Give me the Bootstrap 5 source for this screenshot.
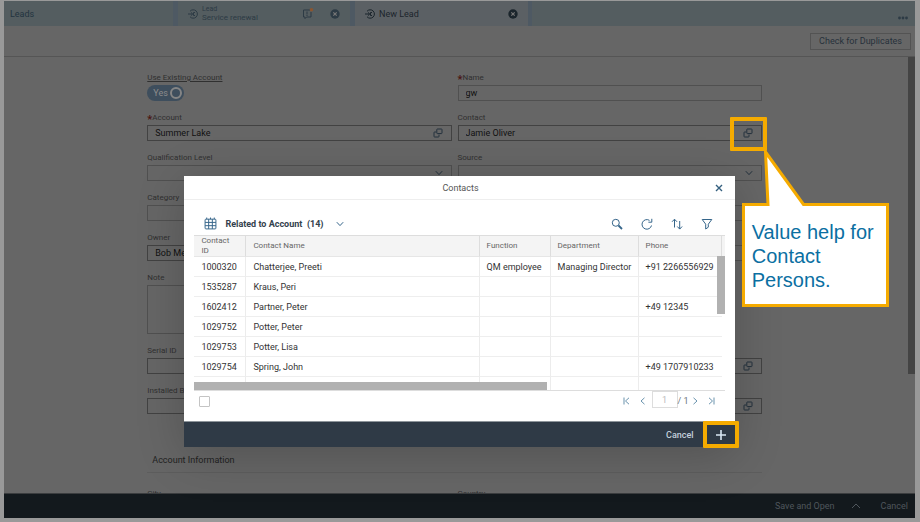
<!DOCTYPE html>
<html lang="en">
<head>
<meta charset="utf-8">
<meta name="viewport" content="width=device-width, initial-scale=1">
<title>New Lead</title>
<link href="https://cdn.jsdelivr.net/npm/bootstrap@5.3.0/dist/css/bootstrap.min.css" rel="stylesheet">
<style>
  body { font-family: Roboto, sans-serif; font-size: 9px; line-height: 12px; background: #999; color: #262626; padding: 1px 5px 4px 4px; min-height: 100vh; }
  svg { display: block; flex: none; fill: none; stroke: currentColor; }
  button { font-size: 9px; line-height: 12px; }
  .plain { background: none; border: 0; padding: 0; color: inherit; }
  .app { background: #666; height: calc(100vh - 5px); }

  .tabbar { height: 25px; background: #545d60; color: #2d3b45; }
  .tab { width: 177px; padding: 0 10px 0 10px; border-right: 5px solid #4e5963; }
  .tab.first { width: 174px; padding-left: 6px; color: #23343f; }
  .tab.active { background: #5b6064; color: #1b252c; border-right-width: 4px; }
  .tab a { color: inherit; text-decoration: none; }
  .tab-kind { font-size: 7px; line-height: 8px; }
  .tab-name { font-size: 8px; line-height: 9px; }
  .dots { padding: 8px 7px 0 0; }
  .toolbar { height: 31px; border-bottom: 1px solid #555; padding-right: 4px; }
  .check-btn { height: 17px; padding: 0 8px; border: 1px solid #535353; color: #27313b; }

  .page { min-height: 0; padding: 14px 10px 0 0; }
  .form-area { width: 68.2%; }
  .pair { display: grid; grid-template-columns: 1fr 1fr; column-gap: 6px; margin-bottom: 10px; }
  .lbl { display: block; font-size: 8px; line-height: 14px; height: 14px; color: #303030; white-space: nowrap; }
  .req::before { content: "*"; color: #4a1410; font-weight: 700; font-size: 11px; line-height: 8px; vertical-align: -3px; }
  .box { position: relative; height: 16px; border: 1px solid #505050; }
  .strong { border-color: #424242; }
  .box input, .box select, .note { background: transparent; border: 0; outline: 0; width: 100%; color: #111; font-size: 9px; line-height: 12px; }
  .box input { padding: 0 7px; height: 14px; }
  .box select { appearance: none; height: 14px; }
  .box button, .box .chev { padding-right: 8px; color: #22303c; }
  .note { display: block; height: 49px; border: 1px solid #505050; resize: none; }
  .switch { width: 37px; height: 16px; border-radius: 8px; background: #3e4e5d; color: #8c8c8c; padding: 0 2px 0 6px; margin-bottom: 0; }
  .switch input { appearance: none; width: 12px; height: 12px; margin: 0; border: 2px solid #858585; border-radius: 50%; }
  .section-title { font-size: 9px; line-height: 12px; color: #222; padding: 40px 0 6px 5px; margin: 0 0 14px; border-bottom: 1px solid #5d5d5d; font-weight: 400; }
  .page-scroll { position: absolute; top: 0; right: 0; width: 7px; height: 317px; background: #444; }
  .app-foot { height: 25px; background: #13191d; border-top: 1px solid #3b3d3f; color: #4f565c; padding-right: 7px; }

  .layer { position: absolute; inset: 0; padding-top: 175px; z-index: 2; }
  .dialog { position: relative; width: 60.4%; background: #fff; color: #333; box-shadow: 0 8px 45px rgba(0,0,0,.2); }
  .dlg-head { height: 24px; border-bottom: 1px solid #eee; padding: 0 12px; color: #555; }
  .dlg-head span { flex: 1; text-align: center; padding-left: 10px; }
  .dlg-bar { padding: 12px 12px 0 10px; height: 35px; color: #35658a; }
  .view-icon { margin-left: 10px; }
  .view-name { font-weight: 700; color: #33414d; padding-left: 8px; }
  .tools { gap: 18px; padding-right: 10px; }
  .grid-view { position: relative; margin: 0 10px; height: 156px; border-bottom: 1px solid #ddd; overflow: hidden; }
  .head-fill { background: #f4f4f4; border-top: 1px solid #ddd; height: 22px; }
  .contacts { table-layout: fixed; border-collapse: separate; border-spacing: 0; width: calc(100% - 3px); margin-top: -22px; }
  .contacts th { height: 22px; padding: 0 7px; font-size: 8px; line-height: 10px; font-weight: 400; color: #666; border-right: 1px solid #ddd; border-bottom: 1px solid #e6e6e6; vertical-align: middle; }
  .contacts td { height: 20px; padding: 0 7px; border-right: 1px solid #ececec; border-bottom: 1px solid #eee; white-space: nowrap; }
  .contacts td:last-child { border-right: 0; }
  .c-id { width: 52px; } .c-fn { width: 71px; } .c-dep { width: 88px; } .c-ph { width: 83px; }
  .bar-v { position: absolute; right: 0; top: 21px; width: 8px; height: 58px; background: #b1b1b1; }
  .bar-h { position: absolute; left: 0; bottom: 0; width: 66.5%; height: 8px; background: #b1b1b1; }
  .pager { height: 30px; padding: 0 20px 10px 15px; color: #6a93ad; }
  .pager input[type=checkbox] { appearance: none; width: 11px; height: 11px; margin: 0; border: 1px solid #c4c4c4; border-radius: 1px; }
  .pager input[type=text] { width: 26px; height: 17px; border: 1px solid #ddd; text-align: center; color: #bbb; font-size: 9px; padding: 0; margin-bottom: 3px; }
  .prev { margin: 0 7px 0 10px; }
  .next { margin: 0 10px 0 4px; }
  .dlg-foot { height: 26px; background: #2f3a46; border-top: 1px solid #8e959b; color: #c3d0dc; }
  .ring { position: absolute; border: 4px solid #f5ab00; border-radius: 1px; }
  .ring-help { right: -6px; top: -9px; width: 37px; height: 34px; z-index: 3; }
  .ring-add { position: relative; width: 36px; height: 27px; margin: -1px -4px -1px 9px; color: #d9e8f4; }
  .callout { position: absolute; left: 6px; top: 27px; width: 150px; height: 160px; }
  .callout svg { position: absolute; inset: 0; }
  .callout p { position: relative; margin: 0; padding: 72px 8px 0 12px; font: 20px/24px "Liberation Sans", sans-serif; color: #0b6fa2; }
</style>
<script src="https://cdn.jsdelivr.net/npm/bootstrap@5.3.0/dist/js/bootstrap.bundle.min.js"></script>
</head>
<body>
<svg width="0" height="0" class="position-absolute" aria-hidden="true">
  <symbol id="help" viewBox="0 0 10 10"><rect x="3.8" y="1" width="5.2" height="4.6" rx=".6"/><path d="M3 4H1.6a.6.6 0 0 0-.6.6v3.8c0 .3.2.6.6.6h3.8c.4 0 .6-.3.6-.6V6.6"/></symbol>
  <symbol id="chev" viewBox="0 0 8 6"><path d="M.8 1.2 4 4.6l3.2-3.4"/></symbol>
  <symbol id="lead" viewBox="0 0 10 10"><path d="M2 2.3a4.2 4.2 0 1 1 0 5.4M0 5h4.5M3 3.4 4.7 5 3 6.6M7 3.5H5.5v3H7"/></symbol>
  <symbol id="shut" viewBox="0 0 10 10"><circle cx="5" cy="5" r="4.7" fill="currentColor" stroke="none"/><path d="m3.3 3.3 3.4 3.4m0-3.4L3.3 6.7" stroke="#777" stroke-width="1.2"/></symbol>
</svg>

<div class="app position-relative d-flex flex-column">
  <nav class="tabbar d-flex flex-shrink-0" aria-label="Open items">
    <div class="tab first d-flex align-items-center"><a href="#">Leads</a></div>
    <div class="tab d-flex align-items-center">
      <svg width="10" height="10"><use href="#lead"/></svg>
      <a href="#" class="ms-1 me-auto"><span class="d-block tab-kind">Lead</span><span class="d-block tab-name">Service renewal</span></a>
      <svg width="12" height="13" viewBox="0 0 12 13" class="me-3"><path d="M8 3H1.500v7H3v1.600L4.600 10H9V5"/><path d="M5 4.500v3M5 8v1"/><circle cx="9.500" cy="2.800" r="1.800" fill="#8a5530" stroke="none"/></svg>
      <button class="plain" aria-label="Close Service renewal"><svg width="10" height="10"><use href="#shut"/></svg></button>
    </div>
    <div class="tab active d-flex align-items-center">
      <svg width="10" height="10"><use href="#lead"/></svg>
      <a href="#" class="ms-1 me-auto" aria-current="page">New Lead</a>
      <button class="plain" aria-label="Close New Lead"><svg width="10" height="10"><use href="#shut"/></svg></button>
    </div>
    <button class="plain ms-auto dots" aria-label="More tabs"><svg width="10" height="4" viewBox="0 0 10 4" stroke="none"><g fill="currentColor" stroke="none"><circle cx="1.500" cy="2" r="1.400"/><circle cx="5" cy="2" r="1.400"/><circle cx="8.500" cy="2" r="1.400"/></g></svg></button>
  </nav>
  <div class="toolbar d-flex align-items-center justify-content-end flex-shrink-0">
    <button class="plain check-btn">Check for Duplicates</button>
  </div>

  <main class="page position-relative flex-grow-1">
    <div class="position-absolute top-0 start-0 end-0 bottom-0 overflow-hidden"><div class="page-scroll"></div></div>
    <form class="form-area mx-auto position-relative">
      <div class="pair">
        <div>
          <label class="lbl text-decoration-underline" for="existing">Use Existing Account</label>
          <div class="switch d-flex align-items-center justify-content-between"><span>Yes</span><input type="checkbox" id="existing" role="switch" checked></div>
        </div>
        <div>
          <label class="lbl req" for="name">Name</label>
          <div class="box"><input id="name" type="text" value="gw"></div>
        </div>
      </div>
      <div class="pair">
        <div>
          <label class="lbl req" for="account">Account</label>
          <div class="box strong d-flex align-items-center"><input id="account" type="text" value="Summer Lake"><button type="button" class="plain" aria-label="Value help for account"><svg width="10" height="10"><use href="#help"/></svg></button></div>
        </div>
        <div>
          <label class="lbl" for="contact">Contact</label>
          <div class="box strong d-flex align-items-center"><input id="contact" type="text" value="Jamie Oliver"><button type="button" class="plain" aria-label="Value help for contact"><svg width="10" height="10"><use href="#help"/></svg></button>
            <div class="ring ring-help">
              <div class="callout">
                <svg width="150" height="160" viewBox="0 0 150 160" fill="none"><path d="M25.500 4 63.500 56.500H147.500V157.500H3.500V56.500H28Z" fill="#fff" stroke="#f5ab00" stroke-width="3"/></svg>
                <p>Value help for Contact Persons.</p>
              </div>
            </div>
          </div>
        </div>
      </div>
      <div class="pair">
        <div>
          <label class="lbl" for="level">Qualification Level</label>
          <div class="box d-flex align-items-center"><select id="level"><option></option></select><svg class="chev" width="16" height="6"><use href="#chev" width="8" height="6"/></svg></div>
        </div>
        <div>
          <label class="lbl" for="source">Source</label>
          <div class="box d-flex align-items-center"><select id="source"><option></option></select><svg class="chev" width="16" height="6"><use href="#chev" width="8" height="6"/></svg></div>
        </div>
      </div>
      <div class="pair">
        <div>
          <label class="lbl" for="category">Category</label>
          <div class="box"><select id="category"><option></option></select></div>
        </div>
        <div><div class="lbl"></div><div class="box"><input type="text" aria-label="Campaign"></div></div>
      </div>
      <div class="pair">
        <div>
          <label class="lbl" for="owner">Owner</label>
          <div class="box strong"><input id="owner" type="text" value="Bob Meyer"></div>
        </div>
        <div><div class="lbl"></div><div class="box"><input type="text" aria-label="Sales unit"></div></div>
      </div>
      <div class="pair">
        <div>
          <label class="lbl" for="note">Note</label>
          <textarea class="note" id="note"></textarea>
        </div>
      </div>
      <div class="pair">
        <div>
          <label class="lbl" for="serial">Serial ID</label>
          <div class="box strong"><input id="serial" type="text"></div>
        </div>
        <div><div class="lbl"></div><div class="box strong d-flex align-items-center"><input type="text" aria-label="Product"><button type="button" class="plain" aria-label="Value help for product"><svg width="10" height="10"><use href="#help"/></svg></button></div></div>
      </div>
      <div class="pair mb-0">
        <div>
          <label class="lbl" for="base">Installed Base</label>
          <div class="box strong"><input id="base" type="text"></div>
        </div>
        <div><div class="lbl"></div><div class="box strong d-flex align-items-center"><input type="text" aria-label="Installation point"><button type="button" class="plain" aria-label="Value help for installation point"><svg width="10" height="10"><use href="#help"/></svg></button></div></div>
      </div>
      <h2 class="section-title">Account Information</h2>
      <div class="pair mb-0"><span class="lbl">City</span><span class="lbl">Country</span></div>
    </form>
  </main>

  <footer class="app-foot position-relative d-flex align-items-center justify-content-end flex-shrink-0">
    <button class="plain">Save and Open</button>
    <button class="plain mx-3" aria-label="More save options"><svg width="10" height="6" viewBox="0 0 10 6"><path d="M1 5l4-4 4 4"/></svg></button>
    <button class="plain ms-1">Cancel</button>
  </footer>

  <div class="layer d-flex justify-content-center align-items-start pe-none">
    <section class="dialog pe-auto" role="dialog" aria-label="Contacts">
      <div class="dlg-head d-flex align-items-center"><span>Contacts</span>
        <button class="plain" aria-label="Close"><svg width="8" height="8" viewBox="0 0 8 8" stroke-width="1.400"><path d="m1 1 6 6M7 1 1 7" stroke="#35607f"/></svg></button>
      </div>
      <div class="dlg-bar d-flex align-items-center">
        <div class="d-flex align-items-center me-auto">
          <svg class="view-icon" width="13" height="13" viewBox="0 0 12 12" stroke-width=".9"><rect x="1" y="2" width="10" height="9" rx=".8"/><path d="M1 5h10M1 8h10M4.300 2v9M7.700 2v9M2.500.5V2M6 .5V2M9.500.5V2"/></svg>
          <span class="view-name">Related to Account&ensp;(14)</span>
          <button class="plain ms-2 ps-1" aria-label="Choose view"><svg width="8" height="6"><use href="#chev"/></svg></button>
        </div>
        <div class="tools d-flex align-items-center">
          <button class="plain" aria-label="Search"><svg width="12" height="12" viewBox="0 0 12 12"><circle cx="4.800" cy="4.800" r="3.500"/><path d="m7.500 7.500 3.500 3.500" stroke-width="1.800"/></svg></button>
          <button class="plain" aria-label="Refresh"><svg width="12" height="12" viewBox="0 0 12 12"><path d="M10.500 7.500A4.800 4.800 0 1 1 8.500 2.400M10.800.8v3.400H7.400"/></svg></button>
          <button class="plain" aria-label="Sort"><svg width="12" height="12" viewBox="0 0 12 12"><path d="M3.500 9.500v-8M1 3.800 3.500 1.200 6 3.800M8.700 3v8M6.300 8.500l2.400 2.600 2.400-2.600"/></svg></button>
          <button class="plain" aria-label="Filter"><svg width="12" height="12" viewBox="0 0 12 12"><path d="M1.200 1.500h9.600L7.300 6.200v3L4.700 11V6.200Z"/></svg></button>
        </div>
      </div>
      <div class="grid-view">
        <div class="head-fill"></div>
        <table class="contacts">
          <thead><tr><th class="c-id">Contact ID</th><th>Contact Name</th><th class="c-fn">Function</th><th class="c-dep">Department</th><th class="c-ph">Phone</th></tr></thead>
          <tbody>
            <tr><td>1000320</td><td>Chatterjee, Preeti</td><td>QM employee</td><td>Managing Director</td><td>+91 2266556929</td></tr>
            <tr><td>1535287</td><td>Kraus, Peri</td><td></td><td></td><td></td></tr>
            <tr><td>1602412</td><td>Partner, Peter</td><td></td><td></td><td>+49 12345</td></tr>
            <tr><td>1029752</td><td>Potter, Peter</td><td></td><td></td><td></td></tr>
            <tr><td>1029753</td><td>Potter, Lisa</td><td></td><td></td><td></td></tr>
            <tr><td>1029754</td><td>Spring, John</td><td></td><td></td><td>+49 1707910233</td></tr>
            <tr><td></td><td></td><td></td><td></td><td></td></tr>
          </tbody>
        </table>
        <div class="bar-v"></div>
        <div class="bar-h"></div>
      </div>
      <div class="pager d-flex align-items-center">
        <input type="checkbox" class="me-auto" aria-label="Select all">
        <button class="plain" aria-label="First page"><svg width="7" height="8" viewBox="0 0 7 8"><path d="M1 .5v7M6 .8 2.500 4 6 7.200"/></svg></button>
        <button class="plain prev" aria-label="Previous page"><svg width="5" height="8" viewBox="0 0 5 8"><path d="M4.500.8 1 4l3.500 3.200"/></svg></button>
        <input type="text" value="1" aria-label="Page"><span class="text-secondary">/ 1</span>
        <button class="plain next" aria-label="Next page"><svg width="5" height="8" viewBox="0 0 5 8"><path d="M.5.800 4 4 .5 7.200"/></svg></button>
        <button class="plain" aria-label="Last page"><svg width="7" height="8" viewBox="0 0 7 8"><path d="M6 .5v7M1 .8 4.500 4 1 7.200"/></svg></button>
      </div>
      <div class="dlg-foot d-flex align-items-center justify-content-end">
        <button class="plain fw-medium">Cancel</button>
        <button class="plain ring ring-add d-flex align-items-center justify-content-center" aria-label="Add contact"><svg width="10" height="10" viewBox="0 0 10 10" stroke-width="1.600"><path d="M5 0v10M0 5h10"/></svg></button>
      </div>
    </section>
  </div>
</div>
</body>
</html>
